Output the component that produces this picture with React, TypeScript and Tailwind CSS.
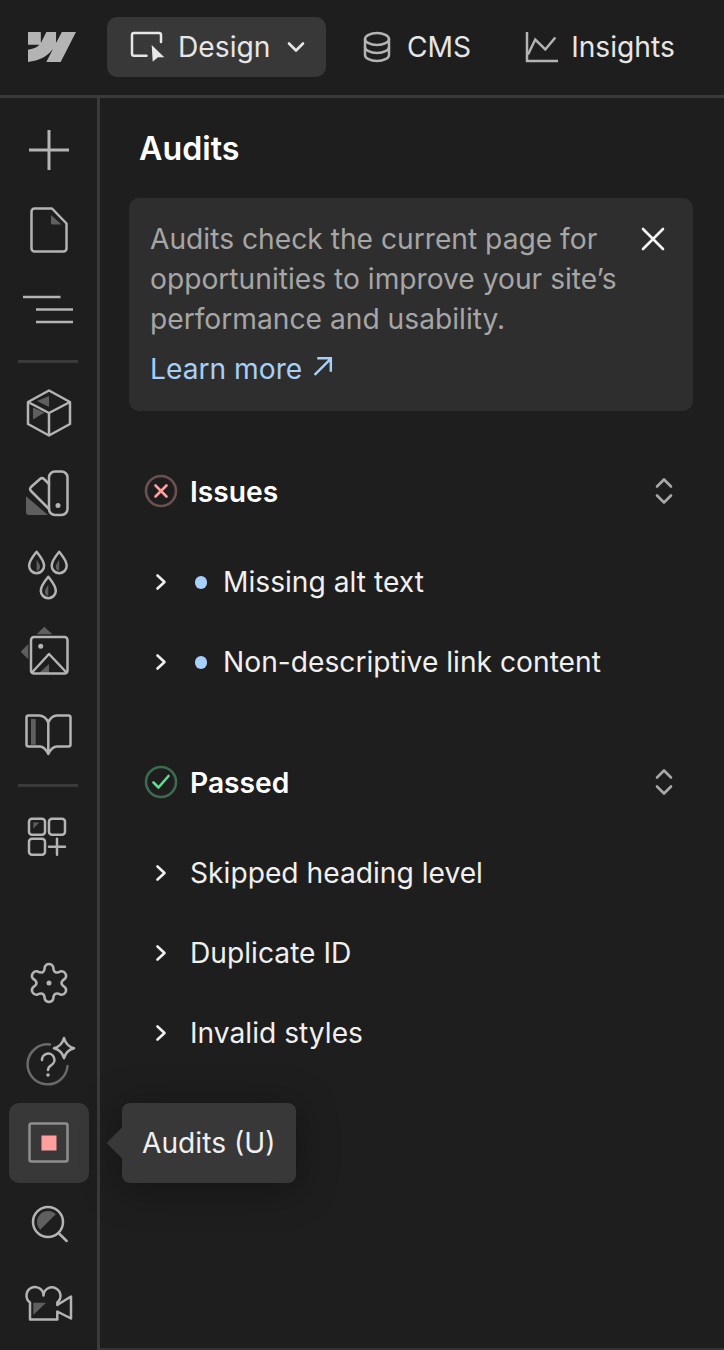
import React from "react";
import { SiWebflow } from "react-icons/si";

const S = "#b4b4b4";
const A = "#5f5f5f";

function RailIcon({ children }: { children: React.ReactNode }) {
  return (
    <svg width="60" height="60" viewBox="-30 -30 60 60" fill="none" stroke={S} strokeWidth="2.5" strokeLinecap="round" strokeLinejoin="round">
      {children}
    </svg>
  );
}

function Cell({ children, active }: { children: React.ReactNode; active?: boolean }) {
  return (
    <div className={`relative h-[80.3px] w-[80px] ml-[9px] flex items-center justify-center rounded-[10px] ${active ? "bg-[#383838]" : ""}`}>
      {children}
    </div>
  );
}

function Divider() {
  return <div className="h-[3px] w-[60px] ml-[18px] my-[9.5px] bg-[#3a3a3a]" />;
}

const starPath = (() => {
  const rad = (deg: number) => (deg * Math.PI) / 180;
  const lobeR = 4.5;
  const centerR = 14.5;
  const valleyR = 9;
  let d = "";
  for (let i = 0; i < 6; i++) {
    const t = -90 + i * 60;
    const cx = centerR * Math.cos(rad(t));
    const cy = centerR * Math.sin(rad(t));
    const p1 = [cx + lobeR * Math.cos(rad(t - 70)), cy + lobeR * Math.sin(rad(t - 70))];
    const p2 = [cx + lobeR * Math.cos(rad(t + 70)), cy + lobeR * Math.sin(rad(t + 70))];
    const nt = t + 60;
    const ncx = centerR * Math.cos(rad(nt));
    const ncy = centerR * Math.sin(rad(nt));
    const np = [ncx + lobeR * Math.cos(rad(nt - 70)), ncy + lobeR * Math.sin(rad(nt - 70))];
    const v = [valleyR * Math.cos(rad(t + 30)), valleyR * Math.sin(rad(t + 30))];
    if (i === 0) d += `M${p1[0].toFixed(2)} ${p1[1].toFixed(2)}`;
    d += `A${lobeR} ${lobeR} 0 0 1 ${p2[0].toFixed(2)} ${p2[1].toFixed(2)}`;
    d += `Q${v[0].toFixed(2)} ${v[1].toFixed(2)} ${np[0].toFixed(2)} ${np[1].toFixed(2)}`;
  }
  return d + "Z";
})();

const DROP = "M0-11C4-6 7.5-2 7.5 3A7.5 7.5 0 0 1-7.5 3C-7.5-2-4-6 0-11Z";

function Chevron() {
  return (
    <svg width="20" height="20" viewBox="0 0 20 20" fill="none" stroke="#f0f0f0" strokeWidth="2.6" strokeLinecap="round" strokeLinejoin="round">
      <path d="M6.5 3.5L13.5 10L6.5 16.5" />
    </svg>
  );
}

function Sorter() {
  return (
    <svg className="mr-[50px]" width="20" height="32" viewBox="0 0 20 32" fill="none" stroke="#a8a8a8" strokeWidth="2.6" strokeLinecap="round" strokeLinejoin="round">
      <path d="M3 11.5L10 4.5L17 11.5M3 20.5L10 27.5L17 20.5" />
    </svg>
  );
}

function Row({ label, dot }: { label: string; dot?: boolean }) {
  return (
    <div className="h-[80px] flex items-center pl-[51px] text-[#f0f0f0]">
      <Chevron />
      {dot ? <span className="ml-[24px] mr-[16px] w-[12px] h-[13px] rounded-full bg-[#a6cffa]" /> : <span className="w-[19px]" />}
      <span>{label}</span>
    </div>
  );
}

function SectionHead({ icon, label }: { icon: React.ReactNode; label: string }) {
  return (
    <div className="h-[40px] flex items-center pl-[44px]">
      {icon}
      <span className="ml-[12px] pt-[2px] font-semibold text-white">{label}</span>
      <span className="flex-1" />
      <Sorter />
    </div>
  );
}

export default function App() {
  return (
    <div className="w-[724px] h-[1350px] overflow-hidden flex flex-col bg-[#1e1e1e] text-[28.2px] leading-[40px] font-['Inter',sans-serif]">
      {/* Top bar */}
      <header className="h-[98px] shrink-0 border-b-[3px] border-[#3a3a3a] flex items-center pb-[2px]">
        <SiWebflow className="ml-[28px] text-[#b4b4b4]" size={48} />
        <div className="ml-[31px] w-[219px] h-[60px] rounded-[10px] bg-[#383838] flex items-center pl-[21px] text-[#e6e6e6]">
          <svg width="40" height="40" viewBox="0 0 40 40" fill="none" stroke="#e6e6e6" strokeWidth="2.5" strokeLinecap="round" strokeLinejoin="round">
            <path d="M18.5 28.7H6a2 2 0 0 1-2-2V8a2 2 0 0 1 2-2h25a2 2 0 0 1 2 2v7" />
            <path d="M23.7 18L36.3 30.3H30L24.7 34.7Z" fill="#e6e6e6" stroke="none" />
          </svg>
          <span className="ml-[10px]">Design</span>
          <svg className="ml-[16px]" width="20" height="20" viewBox="0 0 20 20" fill="none" stroke="#e6e6e6" strokeWidth="2.6" strokeLinecap="round" strokeLinejoin="round">
            <path d="M3 6.5L10 13.5L17 6.5" />
          </svg>
        </div>
        <div className="ml-[37px] flex items-center text-[#e6e6e6]">
          <svg width="28" height="32" viewBox="0 0 28 32" fill="none" stroke={S} strokeWidth="2.5">
            <ellipse cx="14" cy="8" rx="12" ry="6" />
            <path d="M2 8V24C2 27.3 7.4 30 14 30S26 27.3 26 24V8" />
            <path d="M2 16C2 19.3 7.4 22 14 22S26 19.3 26 16" />
          </svg>
          <span className="ml-[16px]">CMS</span>
        </div>
        <div className="ml-[54px] flex items-center text-[#e6e6e6]">
          <svg width="34" height="32" viewBox="0 0 34 32" fill="none" stroke={S} strokeWidth="2.5">
            <path d="M2 1V30H33" />
            <path d="M3 23.5L10.3 8.5L20.3 18.5L30.3 6.5" />
          </svg>
          <span className="ml-[12px]">Insights</span>
        </div>
      </header>

      <div className="flex-1 flex min-h-0">
        {/* Left rail */}
        <nav className="w-[100px] shrink-0 border-r-[3px] border-[#3a3a3a] flex flex-col pt-[12px] pb-[6px]">
          <Cell>
            <RailIcon>
              <path d="M-20 0H20M0-20V20" strokeWidth="3" strokeLinecap="butt" />
            </RailIcon>
          </Cell>
          <Cell>
            <RailIcon>
              <path d="M2-15L12.5-5.5H3a1 1 0 0 1-1-1Z" fill={A} stroke="none" />
              <path d="M-14.5-21.5H3L17.5-6.5V18.5a3 3 0 0 1-3 3H-14.5a3 3 0 0 1-3-3V-18.5a3 3 0 0 1 3-3Z" />
            </RailIcon>
          </Cell>
          <Cell>
            <RailIcon>
              <path d="M-26-14H11.5M-13-1.500H24M-13 11H24" strokeLinecap="butt" />
            </RailIcon>
          </Cell>
          <Divider />
          <Cell>
            <RailIcon>
              <path d="M0-17V-6L-12-12Z" fill={A} stroke="none" />
              <path d="M-16-5.500V6.500L-4.500-.5Z" fill={A} stroke="none" />
              <path d="M0-22.500L21-11V11L0 22.500L-21 11V-11ZM-21-11L0 0L21-11M0 0V22.500" />
            </RailIcon>
          </Cell>
          <Cell>
            <RailIcon>
              <path d="M-23 3.300L-1 22H-20a3 3 0 0 1-3-3Z" fill={A} stroke="none" />
              <rect x="0" y="-21.500" width="18.500" height="43.500" rx="6" />
              <circle cx="9" cy="12.500" r="2.500" fill={S} stroke="none" />
              <path d="M0-9L-5-14a3 3 0 0 0-4 0L-18-6a3 3 0 0 0 0 4L0 16" />
            </RailIcon>
          </Cell>
          <Cell>
            <RailIcon>
              <g transform="translate(-12.400 -11.300)">
                <path d="M0-3C2 0 3.500 2 3.500 4A3.500 4.500 0 0 1 0 8Z" fill={A} stroke="none" />
                <path d={DROP} />
              </g>
              <g transform="translate(10.200 -11.300)">
                <path d="M0-3C-2 0-3.500 2-3.500 4A3.500 4.500 0 0 0 0 8Z" fill={A} stroke="none" />
                <path d={DROP} />
              </g>
              <g transform="translate(-.7 13.700)">
                <path d="M0-3C-2 0-3.500 2-3.500 4A3.500 4.500 0 0 0 0 8Z" fill={A} stroke="none" />
                <path d={DROP} />
              </g>
            </RailIcon>
          </Cell>
          <Cell>
            <RailIcon>
              <path d="M-20.700-10L-28.300-2.300L-20.700 5.300ZM-12.300-19.700L-4.700-27.300L3.300-19.700Z" fill={A} stroke="none" />
              <path d="M0 10V19H-10Z" fill={A} stroke="none" />
              <rect x="-18" y="-17" width="36.500" height="36.500" rx="3" />
              <circle cx="-8.300" cy="-7.800" r="2.500" fill={S} stroke="none" />
              <path d="M-17 18.500L0 0L17.500 18.500" />
            </RailIcon>
          </Cell>
          <Cell>
            <RailIcon>
              <rect x="-18" y="-15" width="4.700" height="25.700" fill={A} stroke="none" />
              <path d="M-.7-11.500C-3-16.500-6-18.500-10-18.500H-20.500a2 2 0 0 0-2 2V10.500a2 2 0 0 0 2 2H-9C-5 12.500-3 15.500-.7 20C1.500 15.500 4 12.500 8 12.500H19.500a2 2 0 0 0 2-2V-16.500a2 2 0 0 0-2-2H8C4-18.500 1.500-16.500-.7-11.500ZM-.7-11.500V20" />
            </RailIcon>
          </Cell>
          <Divider />
          <Cell>
            <RailIcon>
              <path d="M-15.700-14.500H-9.700L-15.700-8.500Z" fill={A} stroke="none" />
              <rect x="-20" y="-18.200" width="16" height="16" rx="3" />
              <rect x="0" y="-18.200" width="16" height="16" rx="3" />
              <rect x="-20" y="1.800" width="16" height="16" rx="3" />
              <path d="M0 9.800H16M8 1.800V17.800" />
            </RailIcon>
          </Cell>
          <div className="flex-1" />
          <Cell>
            <RailIcon>
              <path d={starPath} />
              <circle cx="0" cy="0" r="2.500" fill={S} stroke="none" />
            </RailIcon>
          </Cell>
          <Cell>
            <RailIcon>
              <path d="M1-18.500A20 20 0 1 0 18.500 3" stroke="#6a6a6a" />
              <path d="M-7-3a6.200 6.200 0 1 1 9.500 5c-2 1.300-3.500 2.500-3.500 5" stroke={S} />
              <circle cx="-1" cy="12" r="1.800" fill={S} stroke="none" />
              <path d="M15-25Q17-17 25-14.700Q17-12.500 15-4.700Q13-12.500 5-14.700Q13-17 15-25Z" />
            </RailIcon>
          </Cell>
          <Cell active>
            <RailIcon>
              <rect x="-19.500" y="-19.500" width="38" height="38" rx="2" stroke="#8f8f8f" />
              <rect x="-7.500" y="-7.500" width="15" height="15" fill="#ff9f9f" stroke="none" />
            </RailIcon>
            <div className="absolute left-[113px] top-0 w-[174px] h-[80px] rounded-[8px] bg-[#383838] flex items-center pl-[20px] text-[#f0f0f0] shadow-[0_5px_40px_rgba(0,0,0,0.35)] z-10 whitespace-nowrap">
              <span className="absolute -left-[11px] top-[29px] w-[22px] h-[22px] rotate-45 bg-[#383838]" />
              <span className="relative">Audits (U)</span>
            </div>
          </Cell>
          <Cell>
            <RailIcon>
              <path d="M-8.800 5.800A11 11 0 0 1 6.800-9.800Z" fill={A} stroke="none" />
              <circle cx="-1" cy="-2" r="15" />
              <path d="M9.500 9L17.700 17" />
            </RailIcon>
          </Cell>
          <Cell>
            <RailIcon>
              <path d="M-15.700-1.300H-3L-15.700 11Z" fill={A} stroke="none" />
              <path d="M-19 15.500V-1.600A8.500 8.500 0 1 1-5.500-8.500A8.500 8.500 0 1 1 8.300-1.500V1L22-7.500V14.500L8.300 7.500V15.500Z" />
            </RailIcon>
          </Cell>
        </nav>

        {/* Audits panel */}
        <main className="flex-1 min-w-0 border-b-2 border-[#333333]">
          <h1 className="h-[100px] flex items-center pl-[39px] pt-[2px] text-[32.2px] font-semibold text-white">Audits</h1>
          <section className="relative ml-[29px] mr-[31px] rounded-[10px] bg-[#2e2e2e] pl-[21px] pr-[60px] pt-[21px] pb-[22px] text-[#a6a6a6]">
            <p className="whitespace-nowrap">
              Audits check the current page for
              <br />
              opportunities to improve your site’s
              <br />
              performance and usability.
            </p>
            <a className="mt-[10px] flex items-center text-[#a6cffa]">
              Learn more
              <svg className="ml-[10px] mb-[5px]" width="21" height="21" viewBox="0 0 24 24" fill="none" stroke="#a6cffa" strokeWidth="2.8">
                <path d="M3 21.500L21 3.500M6 2.500H21.500V18" />
              </svg>
            </a>
            <svg className="absolute left-[512px] top-[29px]" width="24" height="24" viewBox="0 0 24 24" fill="none" stroke="#f4f4f4" strokeWidth="2.6" strokeLinecap="round">
              <path d="M2 2L22 22M22 2L2 22" />
            </svg>
          </section>

          <div className="mt-[60px]">
            <SectionHead
              label="Issues"
              icon={
                <svg width="34" height="34" viewBox="0 0 34 34" fill="none">
                  <circle cx="17" cy="17" r="15" stroke="#6d5150" strokeWidth="2.600" />
                  <path d="M11.500 11.500L22.500 22.500M22.500 11.500L11.500 22.500" stroke="#ff9f9f" strokeWidth="2.600" strokeLinecap="round" />
                </svg>
              }
            />
          </div>
          <div className="mt-[31px]">
            <Row label="Missing alt text" dot />
            <Row label="Non-descriptive link content" dot />
          </div>

          <div className="mt-[60px]">
            <SectionHead
              label="Passed"
              icon={
                <svg width="34" height="34" viewBox="0 0 34 34" fill="none">
                  <circle cx="17" cy="17" r="15" stroke="#3d6b50" strokeWidth="2.600" />
                  <path d="M9.500 17.500L14.500 22.500L24.500 11" stroke="#5fdc8f" strokeWidth="2.600" strokeLinecap="round" strokeLinejoin="round" />
                </svg>
              }
            />
          </div>
          <div className="mt-[31px]">
            <Row label="Skipped heading level" />
            <Row label="Duplicate ID" />
            <Row label="Invalid styles" />
          </div>
        </main>
      </div>
    </div>
  );
}
